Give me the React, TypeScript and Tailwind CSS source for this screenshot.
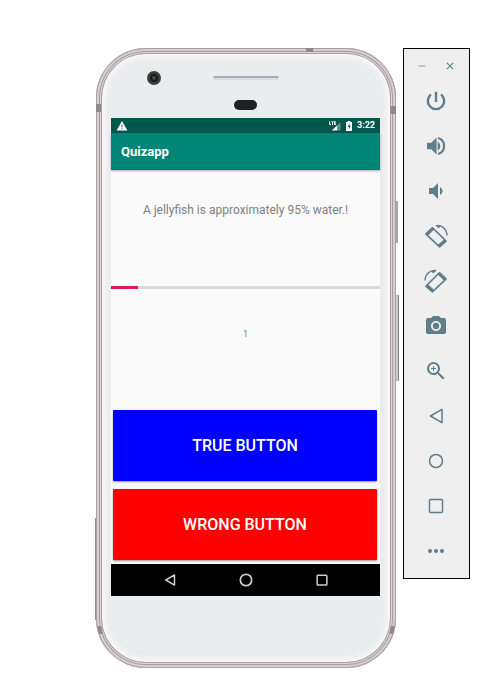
import type { ReactNode } from "react";
import { MdCameraAlt, MdClose, MdMoreHoriz, MdRemove, MdVolumeDown, MdZoomIn } from "react-icons/md";

function PowerIcon() {
  return (
    <svg viewBox="0 0 24 24" className="size-6" fill="none" stroke="currentColor" strokeWidth="2.4">
      <path d="M12 2.8 V13" />
      <path d="M7 5.4 A8.2 8.2 0 1 0 17 5.4" />
    </svg>
  );
}

function VolumeUpIcon() {
  return (
    <svg viewBox="0 0 24 24" className="size-6" fill="currentColor">
      <path d="M3 8.8 V15.2 H7.2 L12.6 20.6 V3.4 L7.2 8.8 Z" />
      <path d="M13.6 7.4 A5.2 5.2 0 0 1 13.6 16.6 Z" />
      <path d="M14 4 A8.3 8.3 0 0 1 14 20" fill="none" stroke="currentColor" strokeWidth="2.2" />
    </svg>
  );
}

function RotateIcon({ mirrored = false }: { mirrored?: boolean }) {
  return (
    <svg viewBox="0 0 24 24" className={mirrored ? "size-6 -scale-x-100" : "size-6"} fill="currentColor">
      <path
        fillRule="evenodd"
        d="M1.4 9.3 L7.8 3.2 Q8.5 2.6 9.2 3.3 L22.6 16.4 Q23.3 17.1 22.6 17.8 L16.2 23.4 Q15.5 24 14.8 23.3 L1.4 10.7 Q0.7 10 1.4 9.3 Z M4.4 11.2 L14.3 20.6 L19.6 15.8 L9.7 6 Z"
      />
      <path d="M12.4 1.6 C18.4 1 22.8 5.4 23 11.6" fill="none" stroke="currentColor" strokeWidth="1.4" />
      <path d="M11.2 1.2 L15 4.6 L16.6 1.8 L13 0.9 Z" />
    </svg>
  );
}

function BackIcon({ className }: { className: string }) {
  return (
    <svg viewBox="0 0 16 16" className={className} fill="none" stroke="currentColor" strokeLinejoin="round">
      <path d="M14 1.3 V14.7 L2.4 8 Z" />
    </svg>
  );
}

function HomeIcon({ className }: { className: string }) {
  return (
    <svg viewBox="0 0 16 16" className={className} fill="none" stroke="currentColor">
      <circle cx="8" cy="8" r="6.5" />
    </svg>
  );
}

function RecentsIcon({ className }: { className: string }) {
  return (
    <svg viewBox="0 0 16 16" className={className} fill="none" stroke="currentColor">
      <rect x="1.5" y="1.5" width="13" height="13" rx="1" />
    </svg>
  );
}

const tools: { label: string; icon: ReactNode }[] = [
  { label: "Power", icon: <PowerIcon /> },
  { label: "Volume up", icon: <VolumeUpIcon /> },
  { label: "Volume down", icon: <MdVolumeDown className="size-6" /> },
  { label: "Rotate left", icon: <RotateIcon /> },
  { label: "Rotate right", icon: <RotateIcon mirrored /> },
  { label: "Take screenshot", icon: <MdCameraAlt className="size-6" /> },
  { label: "Zoom", icon: <MdZoomIn className="size-6" /> },
  { label: "Back", icon: <BackIcon className="size-4 stroke-[1.5]" /> },
  { label: "Home", icon: <HomeIcon className="size-4 stroke-[1.5]" /> },
  { label: "Overview", icon: <RecentsIcon className="size-4 stroke-[1.5]" /> },
  { label: "More", icon: <MdMoreHoriz className="size-6" /> },
];

function Toolbar() {
  return (
    <aside className="w-[67px] shrink-0 border border-black bg-[#efefef] pt-[7px] pr-px pb-[5px] text-[#607d8b]">
      <div className="mb-[2px] flex h-5 items-center justify-center gap-4">
        <button type="button" aria-label="Minimize" className="text-[#8fa4ae]">
          <MdRemove className="size-3" />
        </button>
        <button type="button" aria-label="Close">
          <MdClose className="size-3" />
        </button>
      </div>
      {tools.map((tool) => (
        <button key={tool.label} type="button" aria-label={tool.label} className="flex h-[45px] w-full items-center justify-center">
          {tool.icon}
        </button>
      ))}
    </aside>
  );
}

function StatusBar() {
  return (
    <div className="flex h-[15px] items-center justify-between bg-[#00574b] px-[5px] text-white">
      <svg viewBox="0 0 12 12" className="size-3">
        <path d="M6 1 L11.4 10.6 H0.6 Z" fill="currentColor" />
        <path d="M6 4.6 V7.4 M6 8.2 V9.3" stroke="#00574b" strokeWidth="0.9" />
      </svg>
      <div className="flex items-center gap-1">
        <svg viewBox="0 0 12 10" className="h-[10px] w-3">
          <path d="M11.5 1 V9.5 H8 V4.5 Z" fill="#5c9088" />
          <path d="M8.2 4.2 V9.5 H2.8 Z" fill="currentColor" />
          <path d="M0.7 0.5 V3.5 H2 M2.4 0.8 H4.8 M3.6 0.8 V4 M7 0.8 H5.5 V3.4 H7 M5.5 2.1 H6.8" stroke="currentColor" strokeWidth="1" fill="none" />
        </svg>
        <svg viewBox="0 0 8 10" className="h-[10px] w-2">
          <path d="M2.5 0 H5.5 V1 H7 V10 H1 V1 H2.5 Z" fill="currentColor" />
          <path d="M4.6 2.5 L2.6 5.8 H4 V8.3 L5.7 5 H4.6 Z" fill="#00574b" />
        </svg>
        <span className="text-[9px] leading-[15px] font-bold">3:22</span>
      </div>
    </div>
  );
}

function AnswerButton({ label, color }: { label: string; color: string }) {
  return (
    <button
      type="button"
      className={`h-[71px] w-full rounded-[1px] text-base font-medium text-white shadow-[0_1px_2px_rgba(0,0,0,0.4)] ${color}`}
    >
      {label}
    </button>
  );
}

function Screen() {
  return (
    <div className="bg-[#fafafa]">
      <StatusBar />
      <header className="flex h-[37px] items-center bg-[#008577] px-[10px] shadow-[0_1px_2px_rgba(0,0,0,0.35)]">
        <h1 className="text-[13px] leading-5 font-bold text-white">Quizapp</h1>
      </header>
      <div className="flex h-[116px] flex-col items-center px-2 pt-[30px]">
        <p className="text-center text-xs leading-5 text-[#808080]">A jellyfish is approximately 95% water.!</p>
      </div>
      <div role="progressbar" aria-label="Quiz progress" aria-valuenow={10} className="h-[3px] bg-[#d9d9d9]">
        <div className="h-full w-1/10 bg-[#d81b60]" />
      </div>
      <div className="flex h-[121px] flex-col items-center pt-[35px]">
        <p className="text-[9px] leading-5 text-[#808080]">1</p>
      </div>
      <div className="flex flex-col gap-2 pr-[3px] pb-1 pl-[2px]">
        <AnswerButton label="TRUE BUTTON" color="bg-[#0000ff]" />
        <AnswerButton label="WRONG BUTTON" color="bg-[#ff0000]" />
      </div>
      <nav className="flex h-8 items-center justify-center gap-[63px] bg-black text-[#cccccc]">
        <button type="button" aria-label="Back">
          <BackIcon className="size-3 stroke-2" />
        </button>
        <button type="button" aria-label="Home">
          <HomeIcon className="size-[14px] stroke-2" />
        </button>
        <button type="button" aria-label="Overview">
          <RecentsIcon className="size-3 stroke-2" />
        </button>
      </nav>
    </div>
  );
}

function Phone() {
  return (
    <section className="relative min-w-0 flex-1">
      <span className="absolute top-[470px] -left-px h-[102px] w-1 bg-[#8f8d90]" />
      <span className="absolute top-0 right-[87px] h-1 w-[84px] bg-[#8f8d90]" />
      <span className="absolute top-[153px] -right-[2px] h-[42px] w-1 bg-[#a9a5a7]" />
      <span className="absolute top-[247px] -right-[3px] h-[86px] w-1 rounded-[1px] border-r border-[#858385] bg-[#c9c6c7]" />
      <div className="relative overflow-hidden rounded-[50px] bg-[#ebecee] pr-4 pb-[72px] pl-[15px] shadow-[inset_0_0_0_1px_#aaa1a5,inset_0_0_0_3px_#d6ced1,inset_0_0_0_4px_#a69da1,inset_0_0_0_5px_#ddd6d9,inset_0_0_0_6px_#a79ea2,inset_0_0_5px_9px_#f8f9fa]">
        <span className="absolute top-[56px] left-0 h-2 w-[5px] bg-[#8e8a8c]" />
        <span className="absolute top-[58px] right-0 h-2 w-[5px] bg-[#8e8a8c]" />
        <span className="absolute top-0 right-[83px] h-1 w-[7px] bg-[#8e8a8c]" />
        <span className="absolute bottom-[34px] left-[2px] h-2 w-1 -rotate-12 bg-[#8e8a8c]" />
        <span className="absolute right-[2px] bottom-[34px] h-2 w-1 rotate-12 bg-[#8e8a8c]" />
        <div className="relative flex h-[70px] flex-col items-center pt-7">
          <span className="absolute top-[23px] left-[36px] flex size-[14px] items-center justify-center rounded-full border-[3px] border-[#3b3d40] bg-[#17191b]">
            <span className="size-1 rounded-full bg-[#4a4b35]" />
          </span>
          <span className="h-1 w-[66px] rounded-full border-t-2 border-[#a9abb9] bg-[#dcdde2]" />
          <span className="mt-5 h-[10px] w-[23px] rounded-full bg-[#1d2024]" />
        </div>
        <Screen />
      </div>
    </section>
  );
}

export default function App() {
  return (
    <main className="flex min-h-screen items-start gap-[7px] bg-white pt-12 pr-[26px] pl-24 font-[Roboto,'Liberation_Sans',sans-serif]">
      <Phone />
      <Toolbar />
    </main>
  );
}
